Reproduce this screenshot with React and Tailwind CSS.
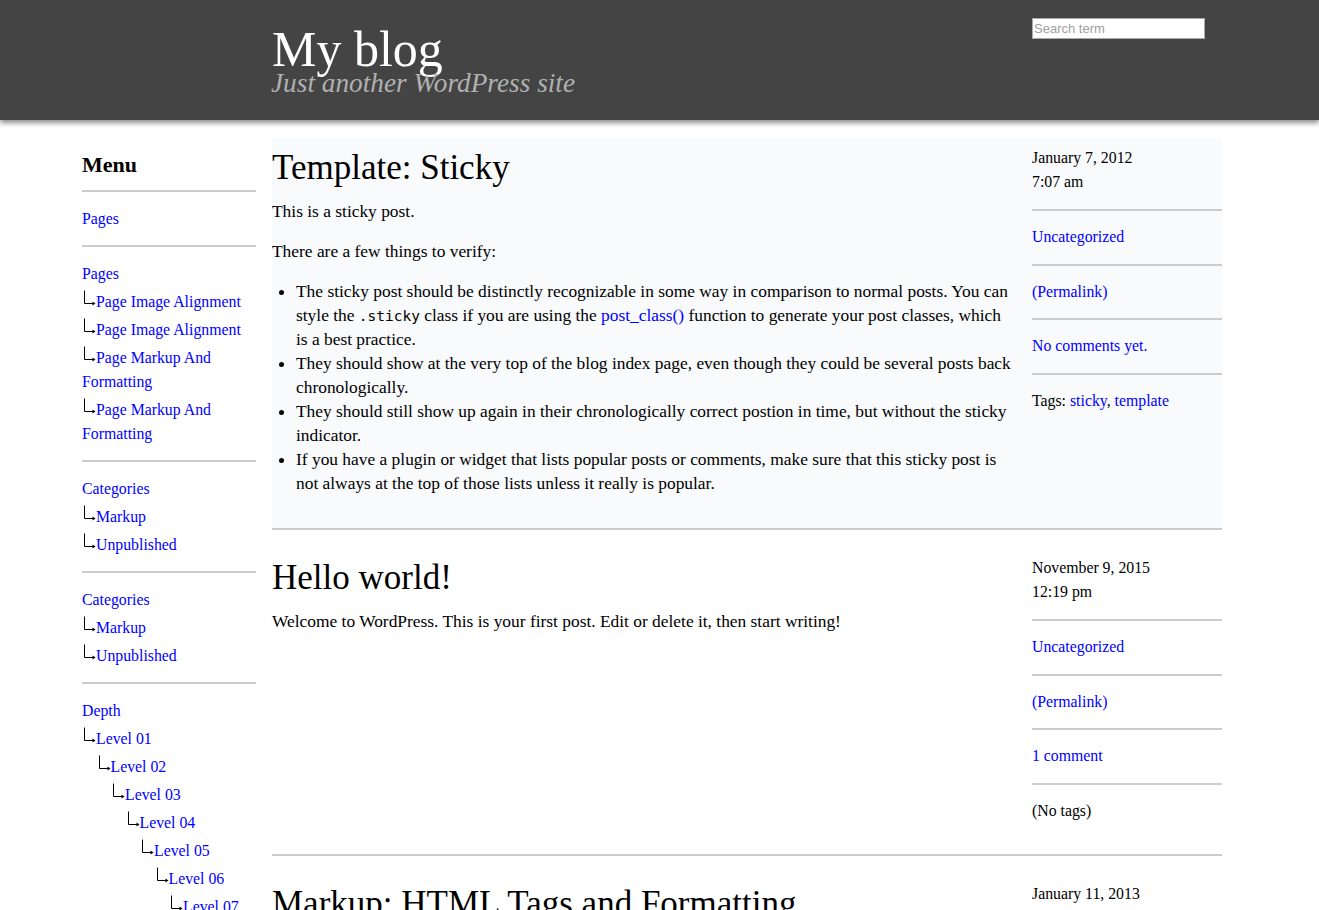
import React from "react";

const Arrow = () => (
  <svg width="14" height="24" viewBox="0 0 14 24" className="inline-block align-top">
    <path d="M2.5 0.5 V13.5 H11" stroke="#000" strokeWidth="1" fill="none" />
    <path d="M10.5 11.5 L13.5 13.5 L10.5 15.5 Z" fill="#000" />
  </svg>
);

const A = ({ children }) => (
  <a href="#" className="text-[#0000ff]">
    {children}
  </a>
);

const Item = ({ children, sub }) => (
  <li className="mb-[4px]">
    <Arrow />
    <A>{children}</A>
    {sub}
  </li>
);

const SideSection = ({ title, children }) => (
  <div className="pt-[15px] pb-[10px] border-b-2 border-[#cccccc]">
    <div className="mb-[4px]">
      <A>{title}</A>
    </div>
    <ul>{children}</ul>
  </div>
);

const levels = ["Level 01", "Level 02", "Level 03", "Level 04", "Level 05", "Level 06", "Level 07", "Level 08"];

const Depth = ({ i }) => {
  if (i >= levels.length) return null;
  return (
    <Item sub={i + 1 < levels.length ? <ul className="pl-[14.5px] mt-[4px]"><Depth i={i + 1} /></ul> : null}>
      {levels[i]}
    </Item>
  );
};

const MetaBlock = ({ children, first, last }) => (
  <div
    className={
      (first ? "pt-[8px] pb-[15px]" : "pt-[14px] pb-[14.5px]") +
      (last ? "" : " border-b-2 border-[#cccccc]")
    }
  >
    {children}
  </div>
);

const Post = ({ title, sticky, meta, children }) => (
  <article
    className={
      "mt-[18px] pb-[17px] border-b-2 border-[#cccccc] flex gap-[20px] items-start " +
      (sticky ? "bg-[#f9fafc]" : "")
    }
  >
    <div className="w-[740px] pt-[10px]">
      <h2 className="text-[35px] leading-[40px] mb-[11px]">{title}</h2>
      {children}
    </div>
    <div className="w-[190px] text-[15.8px] leading-[24px]">{meta}</div>
  </article>
);

const Meta = ({ date, time, comments, tags }) => (
  <>
    <MetaBlock first>
      <div>{date}</div>
      <div>{time}</div>
    </MetaBlock>
    <MetaBlock>
      <A>Uncategorized</A>
    </MetaBlock>
    <MetaBlock>
      <A>(Permalink)</A>
    </MetaBlock>
    <MetaBlock>
      <A>{comments}</A>
    </MetaBlock>
    <MetaBlock last>{tags}</MetaBlock>
  </>
);

export default function App() {
  return (
    <div className="min-h-screen bg-white text-black font-['Liberation_Serif',serif]">
      <header className="h-[120px] bg-[#444444] shadow-[0_3px_5px_rgba(0,0,0,0.45)]">
        <div className="ml-[272px] w-[950px] flex gap-[20px]">
          <div className="w-[740px] pt-[29px]">
            <h1 className="text-[50px] leading-[41px] text-white">My blog</h1>
            <p className="text-[27.3px] leading-[26px] italic text-[#b0b0b0] -ml-[1px]">
              Just another WordPress site
            </p>
          </div>
          <div className="w-[190px] pt-[18px]">
            <input
              type="text"
              placeholder="Search term"
              className="block w-[173px] h-[21px] bg-white border border-[#aaaaaa] px-[1px] text-[13px] font-['Liberation_Sans',sans-serif] placeholder:text-[#a0a0a0] outline-none"
            />
          </div>
        </div>
      </header>

      <div className="ml-[82px] flex gap-[16px] items-start">
        <aside className="w-[174px] pt-[33px] text-[15.8px] leading-[24px]">
          <div className="pb-[13px] border-b-2 border-[#cccccc]">
            <h3 className="text-[22px] leading-[24px] font-bold">Menu</h3>
          </div>
          <div className="pt-[15px] pb-[10px] border-b-2 border-[#cccccc]">
            <div className="mb-[4px]">
              <A>Pages</A>
            </div>
          </div>
          <SideSection title="Pages">
            <Item>Page Image Alignment</Item>
            <Item>Page Image Alignment</Item>
            <Item>Page Markup And Formatting</Item>
            <Item>Page Markup And Formatting</Item>
          </SideSection>
          <SideSection title="Categories">
            <Item>Markup</Item>
            <Item>Unpublished</Item>
          </SideSection>
          <SideSection title="Categories">
            <Item>Markup</Item>
            <Item>Unpublished</Item>
          </SideSection>
          <SideSection title="Depth">
            <Depth i={0} />
          </SideSection>
        </aside>

        <main className="w-[950px] text-[17.4px] leading-[24px]">
          <Post
            sticky
            title="Template: Sticky"
            meta={
              <Meta
                date="January 7, 2012"
                time="7:07 am"
                comments="No comments yet."
                tags={
                  <>
                    Tags: <A>sticky</A>, <A>template</A>
                  </>
                }
              />
            }
          >
            <p className="mb-[16px]">This is a sticky post.</p>
            <p className="mb-[16px]">There are a few things to verify:</p>
            <ul className="list-disc pl-[24px] mb-[16px]">
              <li>
                The sticky post should be distinctly recognizable in some way in comparison to normal posts. You can
                style the{" "}
                <code className="font-['DejaVu_Sans_Mono',monospace] text-[14.5px] leading-none">.sticky</code> class
                if you are using the <A>post_class()</A> function to generate your post classes, which is a best
                practice.
              </li>
              <li>
                They should show at the very top of the blog index page, even though they could be several posts back
                chronologically.
              </li>
              <li>
                They should still show up again in their chronologically correct postion in time, but without the
                sticky indicator.
              </li>
              <li>
                If you have a plugin or widget that lists popular posts or comments, make sure that this sticky post is
                not always at the top of those lists unless it really is popular.
              </li>
            </ul>
          </Post>

          <Post
            title="Hello world!"
            meta={<Meta date="November 9, 2015" time="12:19 pm" comments="1 comment" tags="(No tags)" />}
          >
            <p className="mb-[16px]">
              Welcome to WordPress. This is your first post. Edit or delete it, then start writing!
            </p>
          </Post>

          <Post
            title="Markup: HTML Tags and Formatting"
            meta={
              <Meta
                date="January 11, 2013"
                time="3:15 pm"
                comments="No comments yet."
                tags={
                  <>
                    Tags: <A>content</A>, <A>css</A>, <A>formatting</A>, <A>html</A>, <A>markup</A>
                  </>
                }
              />
            }
          >
            <p className="mb-[16px]">
              <strong>Headings</strong>
            </p>
            <p className="mb-[16px]">Header one</p>
            <p className="mb-[16px]">Header two</p>
          </Post>
        </main>
      </div>
    </div>
  );
}
